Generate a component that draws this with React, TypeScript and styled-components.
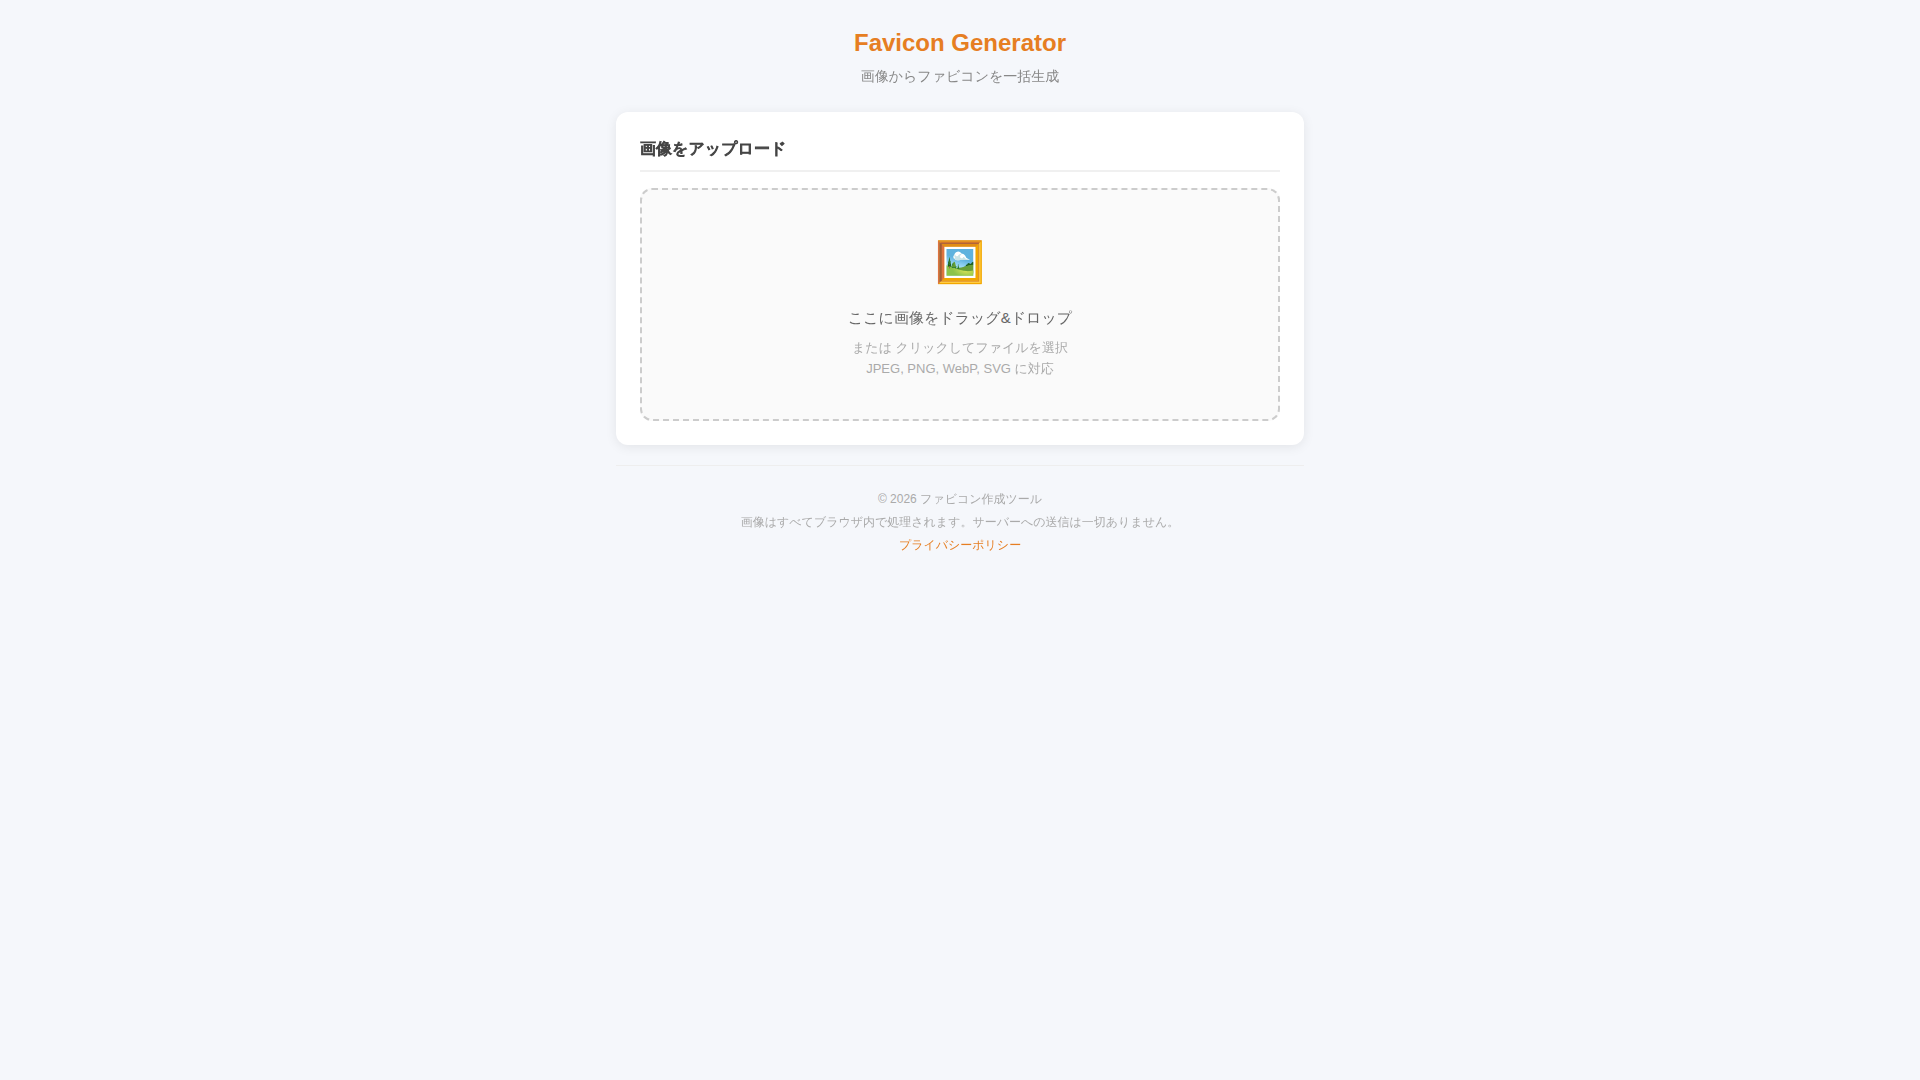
import React from "react";
import styled, { createGlobalStyle } from "styled-components";

const GlobalStyle = createGlobalStyle`
  * { box-sizing: border-box; margin: 0; padding: 0; }
  body {
    background: #f5f7fb;
    color: #333;
    font-family: "Liberation Sans", "WenQuanYi Zen Hei", "Noto Sans CJK JP", sans-serif;
    line-height: 1.6;
  }
`;

const Page = styled.div`
  max-width: 720px;
  margin: 0 auto;
  padding: 24px 16px;
`;

const Header = styled.header`
  text-align: center;
  margin-bottom: 26px;
`;

const Title = styled.h1`
  color: #e67e22;
  font-size: 24px;
  line-height: 38px;
`;

const Subtitle = styled.p`
  color: #888;
  font-size: 14px;
  line-height: 20px;
  margin-top: 4px;
`;

const Card = styled.section`
  background: #fff;
  border-radius: 12px;
  box-shadow: 0 2px 12px rgba(0, 0, 0, 0.08);
  padding: 24px;
  margin-bottom: 20px;
`;

/* WenQuanYi Zen Hei has no bold face, so the stroke supplies the weight. */
const CardTitle = styled.h2`
  color: #444;
  font-size: 16px;
  font-weight: 700;
  -webkit-text-stroke: 1px #444;
  line-height: 26px;
  padding-bottom: 8px;
  border-bottom: 2px solid #f0f0f0;
  margin-bottom: 16px;
`;

const DropZone = styled.label`
  display: block;
  background: #fafafa;
  border: 2px dashed #ccc;
  border-radius: 12px;
  padding: 40px 20px;
  text-align: center;
  cursor: pointer;
`;

const FileInput = styled.input`
  display: none;
`;

const Icon = styled.div`
  font-size: 40px;
  line-height: 64px;
  margin-bottom: 12px;
`;

const DropText = styled.p`
  color: #666;
  font-size: 15px;
  line-height: 24px;
  margin-bottom: 7px;
`;

const Hint = styled.p`
  color: #aaa;
  font-size: 13px;
  line-height: 21px;
`;

const Footer = styled.footer`
  display: grid;
  gap: 4px;
  border-top: 1px solid #eee;
  color: #aaa;
  font-size: 12px;
  line-height: 19px;
  text-align: center;
  padding: 24px 0;
`;

const PolicyLink = styled.a`
  color: #e67e22;
  text-decoration: none;
`;

export default function App() {
  return (
    <>
      <GlobalStyle />
      <Page>
        <Header>
          <Title>Favicon Generator</Title>
          <Subtitle>画像からファビコンを一括生成</Subtitle>
        </Header>
        <main>
          <Card>
            <CardTitle>画像をアップロード</CardTitle>
            <DropZone>
              <FileInput type="file" accept="image/*" />
              <Icon aria-hidden="true">🖼️</Icon>
              <DropText>ここに画像をドラッグ&amp;ドロップ</DropText>
              <Hint>または クリックしてファイルを選択</Hint>
              <Hint>JPEG, PNG, WebP, SVG に対応</Hint>
            </DropZone>
          </Card>
        </main>
        <Footer>
          <p>© 2026 ファビコン作成ツール</p>
          <p>画像はすべてブラウザ内で処理されます。サーバーへの送信は一切ありません。</p>
          <p><PolicyLink href="#privacy">プライバシーポリシー</PolicyLink></p>
        </Footer>
      </Page>
    </>
  );
}
